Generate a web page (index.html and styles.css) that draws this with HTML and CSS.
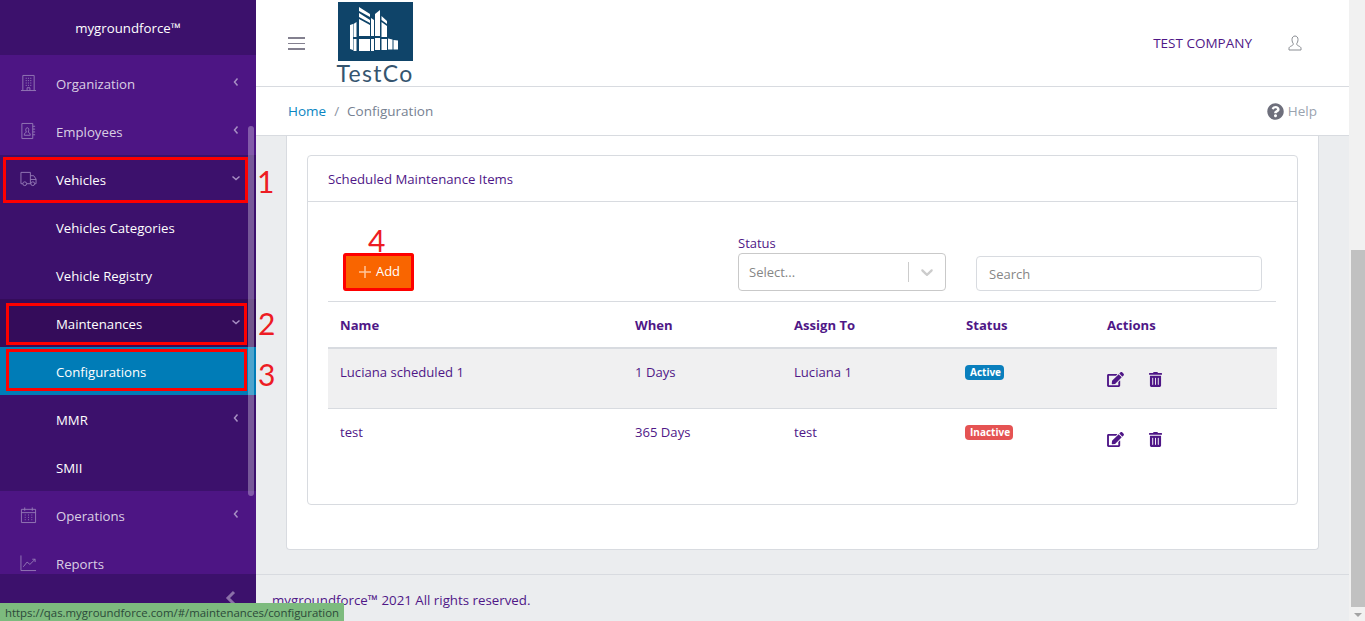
FILE: index.html
```html
<!DOCTYPE html>
<html lang="en">
<head>
<meta charset="utf-8">
<title>Scheduled Maintenance Items</title>
<link rel="stylesheet" href="styles.css">
</head>
<body>
<aside class="sidebar">
  <div class="brand">mygroundforce™</div>
  <nav class="nav">
    <a class="item"><svg class="ico" viewBox="0 0 18 18"><path d="M3 17V1h12v16M1 17h16M7.500 17v-3h3v3M6 4h1.200M8.400 4h1.200M10.800 4H12M6 6.500h1.200M8.400 6.500h1.200M10.800 6.500H12M6 9h1.200M8.400 9h1.200M10.800 9H12M6 11.500h1.200M8.400 11.500h1.200M10.800 11.500H12"/></svg><span class="label">Organization</span><svg class="chev" viewBox="0 0 8 10"><path d="M5.500 1.500 2.500 5l3 3.500"/></svg></a>
    <a class="item"><svg class="ico" viewBox="0 0 18 18"><path d="M2 1h11.500v16H2zM13.500 4H16M13.500 7H16M13.500 10H16M13.500 13H16M4.500 13.500c0-2 1-2.800 2.300-3.300C5.700 8.800 5.800 5.500 7.700 5.500s2 3.300.9 4.700c1.300.5 2.300 1.300 2.300 3.300z"/></svg><span class="label">Employees</span><svg class="chev" viewBox="0 0 8 10"><path d="M5.500 1.500 2.500 5l3 3.500"/></svg></a>
    <a class="item open"><svg class="ico" viewBox="0 0 18 18"><path d="M3 14H1V2h10v12H7M11 5.500h3.500L17 9v5h-1.500M11 14h.500M11 9.500h6M3 14a2 2 0 1 0 4 0 2 2 0 1 0-4 0M11.500 14a2 2 0 1 0 4 0 2 2 0 1 0-4 0"/></svg><span class="label">Vehicles</span><svg class="chev" viewBox="0 0 10 8"><path d="M1.500 2.500 5 5.500l3.500-3"/></svg></a>
    <a class="item sub">Vehicles Categories</a>
    <a class="item sub">Vehicle Registry</a>
    <a class="item sub deep"><span class="label">Maintenances</span><svg class="chev" viewBox="0 0 10 8"><path d="M1.500 2.500 5 5.500l3.500-3"/></svg></a>
    <a class="item sub current">Configurations</a>
    <a class="item sub"><span class="label">MMR</span><svg class="chev" viewBox="0 0 8 10"><path d="M5.500 1.500 2.500 5l3 3.500"/></svg></a>
    <a class="item sub">SMII</a>
    <a class="item"><svg class="ico" viewBox="0 0 18 18"><path d="M1.500 3h15v14h-15zM1.500 6.500h15M5 1v3.500M13 1v3.500M5 9h1M8.500 9h1M12 9h1M5 11.500h1M8.500 11.500h1M12 11.500h1M5 14h1M8.500 14h1M12 14h1"/></svg><span class="label">Operations</span><svg class="chev" viewBox="0 0 8 10"><path d="M5.500 1.500 2.500 5l3 3.500"/></svg></a>
    <a class="item"><svg class="ico" viewBox="0 0 18 18"><path d="M1 1v16h16M3.500 13l4-5 3 2.500L16 5M13 5h3v3"/></svg><span class="label">Reports</span></a>
    <div class="nav-thumb"></div>
  </nav>
  <div class="collapse"><svg class="collapse-ico" viewBox="0 0 12 16"><path d="M9 2 3 8l6 6"/></svg></div>
</aside>

<div class="main">
  <header class="topbar">
    <div class="burger"><i></i><i></i><i></i></div>
    <div class="logo">
      <svg class="logo-mark" viewBox="0 0 75 59">
        <rect width="75" height="59" fill="#0f4469"/>
        <path fill="#fff" d="M12 23l3-1v26l-3-1zM15.500 22l3-2v15h-3zM15.500 37h3v12h-3zM21 5l11 7v3L21 9zM21 11l11 7v3l-11-6zM21 17l11 6v11H21zM21 37h11v12H21zM33 16l3 2v16h-3zM33 37h3v12h-3zM37 12l5-4v26h-5zM37 36h5v12h-5zM43.500 14l5.500 5v3l-5.500-4zM43.500 20l5.500 4v11h-5.500zM43.500 37H49v11h-5.500zM50 36.500l4.500 1v10H50zM55.500 38l4.500 .6v9h-4.500z"/>
      </svg>
      <span class="logo-text">TestCo</span>
    </div>
    <div class="company">TEST COMPANY</div>
    <svg class="user" viewBox="0 0 14 16"><path d="M4 4.500C4 2.500 5.200 1 7 1s3 1.500 3 3.500c0 2-.8 3.500-1.300 4.200 0 1.300.6 1.600 2 2.300 1.500.7 2.300 1.300 2.300 2.200V15H1v-1.800c0-.9.800-1.500 2.300-2.200 1.400-.7 2-1 2-2.300C4.800 8 4 6.500 4 4.500z"/></svg>
  </header>
  <div class="crumbs">
    <a class="home">Home</a><span class="sep">/</span><span class="here">Configuration</span>
    <span class="help"><svg class="help-ico" viewBox="0 0 512 512"><path d="M504 256c0 136.997-111.043 248-248 248S8 392.997 8 256C8 119.083 119.043 8 256 8s248 111.083 248 248zM262.655 90c-54.497 0-89.255 22.957-116.549 63.758-3.536 5.286-2.353 12.415 2.715 16.258l34.699 26.31c5.205 3.947 12.621 3.008 16.665-2.122 17.864-22.658 30.113-35.797 57.303-35.797 20.429 0 45.698 13.148 45.698 32.958 0 14.976-12.363 22.667-32.534 33.976C247.128 238.528 216 254.941 216 296v4c0 6.627 5.373 12 12 12h56c6.627 0 12-5.373 12-12v-1.333c0-28.462 83.186-29.647 83.186-106.667 0-58.002-60.165-102-116.531-102zM256 338c-25.365 0-46 20.635-46 46 0 25.364 20.635 46 46 46s46-20.636 46-46c0-25.365-20.635-46-46-46z"/></svg>Help</span>
  </div>
  <main class="content">
    <section class="outer">
      <div class="card">
        <div class="card-head">Scheduled Maintenance Items</div>
        <div class="card-body">
          <div class="toolbar">
            <button class="add"><svg class="plus" viewBox="0 0 14 14"><path d="M7 1v12M1 7h12"/></svg>Add</button>
            <div class="status-field">
              <label class="field-label">Status</label>
              <div class="select"><span class="placeholder">Select...</span><span class="divider"></span><svg class="select-chev" viewBox="0 0 20 20"><path d="M4.516 7.548c.436-.446 1.043-.481 1.576 0L10 11.295l3.908-3.747c.533-.481 1.141-.446 1.574 0 .436.445.408 1.197 0 1.615-.406.418-4.695 4.502-4.695 4.502a1.095 1.095 0 0 1-1.576 0S4.924 9.581 4.516 9.163s-.436-1.170 0-1.615z"/></svg></div>
            </div>
            <div class="search"><span class="placeholder">Search</span></div>
          </div>
          <table class="grid">
            <thead>
              <tr><th class="c1">Name</th><th class="c2">When</th><th class="c3">Assign To</th><th class="c4">Status</th><th class="c5">Actions</th></tr>
            </thead>
            <tbody>
              <tr class="odd"><td>Luciana scheduled 1</td><td>1 Days</td><td>Luciana 1</td><td><span class="badge active">Active</span></td><td><div class="acts"><svg class="edit" viewBox="0 0 576 512"><use href="#i-edit"/></svg><svg class="trash" viewBox="0 0 448 512"><use href="#i-trash"/></svg></div></td></tr>
              <tr><td>test</td><td>365 Days</td><td>test</td><td><span class="badge inactive">Inactive</span></td><td><div class="acts"><svg class="edit" viewBox="0 0 576 512"><use href="#i-edit"/></svg><svg class="trash" viewBox="0 0 448 512"><use href="#i-trash"/></svg></div></td></tr>
            </tbody>
          </table>
        </div>
      </div>
    </section>
  </main>
  <footer class="foot">mygroundforce™ 2021 All rights reserved.</footer>
</div>
<div class="rail"><div class="rail-thumb"></div><div class="rail-arrow"></div></div>

<svg class="defs" aria-hidden="true">
  <symbol id="i-edit" viewBox="0 0 576 512"><path d="M402.600 83.200l90.200 90.200c3.800 3.800 3.800 10 0 13.800L274.400 405.600l-92.800 10.300c-12.400 1.400-22.900-9.100-21.500-21.500l10.300-92.800L388.800 83.200c3.800-3.800 10-3.800 13.800 0zm162-22.900l-48.800-48.800c-15.200-15.200-39.900-15.200-55.200 0l-35.400 35.400c-3.800 3.800-3.800 10 0 13.800l90.200 90.200c3.800 3.800 10 3.800 13.800 0l35.400-35.400c15.200-15.300 15.200-40 0-55.200zM384 346.200V448H64V128h229.800c3.200 0 6.200-1.300 8.500-3.500l40-40c7.600-7.600 2.200-20.500-8.500-20.500H48C21.500 64 0 85.500 0 112v352c0 26.500 21.500 48 48 48h352c26.500 0 48-21.500 48-48V306.200c0-10.700-12.900-16-20.500-8.500l-40 40c-2.200 2.300-3.500 5.300-3.500 8.500z"/></symbol>
  <symbol id="i-trash" viewBox="0 0 448 512"><path d="M32 464a48 48 0 0 0 48 48h288a48 48 0 0 0 48-48V128H32zm272-256a16 16 0 0 1 32 0v224a16 16 0 0 1-32 0zm-96 0a16 16 0 0 1 32 0v224a16 16 0 0 1-32 0zm-96 0a16 16 0 0 1 32 0v224a16 16 0 0 1-32 0zM432 32H312l-9.400-18.700A24 24 0 0 0 281.100 0H166.800a23.720 23.720 0 0 0-21.400 13.300L136 32H16A16 16 0 0 0 0 48v32a16 16 0 0 0 16 16h416a16 16 0 0 0 16-16V48a16 16 0 0 0-16-16z"/></symbol>
</svg>

<div class="mark m1"></div>
<div class="mark m2"></div>
<div class="mark m3"></div>
<div class="mark m4"></div>
<div class="num n1">1</div>
<div class="num n2">2</div>
<div class="num n3">3</div>
<div class="num n4">4</div>
<div class="url">https://qas.mygroundforce.com/#/maintenances/configuration</div>
</body>
</html>
```
FILE: styles.css
```css
* { box-sizing: border-box; }
html, body { height: 100%; }
body {
  margin: 0;
  display: flex;
  height: 621px;
  overflow: hidden;
  font-family: "Open Sans", "Noto Sans", sans-serif;
  font-size: 13.200px;
  color: #4f1787;
  background: #ebedef;
}

/* sidebar */
.sidebar { width: 256px; flex: none; display: flex; flex-direction: column; background: #4d1584; }
.brand { height: 55px; flex: none; background: #3c116c; color: #fff; display: flex; align-items: center; justify-content: center; font-size: 13.250px; padding-top: 1px; }
.nav { position: relative; flex: 1; min-height: 0; overflow: hidden; padding-top: 4px; }
.item { height: 48px; display: flex; align-items: center; padding: 2px 15px 0 20px; color: rgba(255,255,255,.8); font-size: 13.200px; }
.item.open { background: #3c116c; color: #fff; }
.item.sub { background: #3c116c; color: #fff; padding-left: 56px; }
.item.deep { background: #340c5a; }
.item.current { background: #007cb7; }
.ico { width: 17px; height: 18px; margin: -2px 19px 0 0; flex: none; fill: none; stroke: #9479b6; stroke-width: 1; }
.label { flex: 1; }
.chev { width: 10px; height: 10px; flex: none; fill: none; stroke: #a78fc3; stroke-width: 1.500; margin-top: -5px; }
.nav-thumb { position: absolute; left: 248px; top: 71px; width: 6px; height: 370px; border-radius: 3px; background: rgba(255,255,255,.3); }
.collapse { height: 47px; flex: none; background: #3c116c; display: flex; justify-content: flex-end; align-items: flex-start; padding: 16px 18px 0 0; }
.collapse-ico { width: 14px; height: 16px; fill: none; stroke: #8b70a8; stroke-width: 3; }

/* main */
.main { flex: 1; min-width: 0; display: flex; flex-direction: column; }
.topbar { height: 87px; flex: none; background: #fff; border-bottom: 1px solid #d8dbe0; display: flex; align-items: flex-start; padding: 0 47px 0 32px; }
.burger { width: 17px; margin-top: 37px; display: flex; flex-direction: column; gap: 4px; }
.burger i { display: block; height: 1.500px; background: #83808f; }
.logo { margin-left: 32px; width: 76px; display: flex; flex-direction: column; align-items: center; padding-top: 2px; }
.logo-mark { width: 75px; height: 59px; display: block; }
.logo-text { font-family: "Lato", sans-serif; font-size: 23px; line-height: 24px; color: #35556f; letter-spacing: 1.300px; white-space: nowrap; }
.company { margin-left: auto; margin-top: 34px; font-size: 13.500px; line-height: 18px; color: #4f1787; }
.user { width: 14px; height: 16px; margin: 35px 0 0 36px; fill: none; stroke: #8a8d93; stroke-width: 1; }
.crumbs { height: 49px; flex: none; background: #fff; border-bottom: 1px solid #d8dbe0; display: flex; align-items: center; padding: 0 32px; font-size: 13.500px; }
.home { color: #0a85c2; }
.sep { margin: 0 8px; color: #8a93a2; }
.here { color: #768192; }
.help { margin-left: auto; display: flex; align-items: center; color: #9aa3af; }
.help-ico { width: 17px; height: 17px; margin-right: 4px; fill: #6e6f7c; }
.content { flex: 1; min-height: 0; overflow: hidden; padding: 0 30px; }
.outer { background: #fff; border: 1px solid #d8dbe0; border-top: 0; border-radius: 0 0 4px 4px; padding: 19px 20px 44px; }
.card { border: 1px solid #d8dbe0; border-radius: 4px; height: 350px; }
.card-head { height: 46px; border-bottom: 1px solid #d8dbe0; display: flex; align-items: center; padding: 0 20px; font-size: 13.200px; }
.card-body { padding: 0 21px 0 20px; }
.toolbar { height: 100px; border-bottom: 1px solid #d8dbe0; display: flex; align-items: flex-end; padding: 0 0 10px 16px; }
.add { width: 70px; height: 38px; border: 0; border-radius: 3px; background: #f96500; color: #fff; font: 500 13px "Open Sans", sans-serif; display: flex; align-items: center; justify-content: center; padding: 0 0 2px; }
.plus { width: 14px; height: 14px; margin: 2px 4px 0 0; fill: none; stroke: #ffc59b; stroke-width: 1.500; }
.status-field { margin-left: 324px; width: 208px; }
.field-label { display: block; font-size: 13px; line-height: 18px; margin-bottom: 1px; }
.select { height: 38px; border: 1px solid #c9c9c9; border-radius: 4px; display: flex; align-items: center; padding: 0 8px 0 10px; }
.placeholder { color: #868686; font-size: 13px; flex: 1; }
.divider { width: 1px; height: 20px; background: #cccccc; }
.select-chev { width: 20px; height: 20px; margin-left: 8px; fill: #cccccc; }
.search { margin-left: 30px; width: 286px; height: 35px; border: 1px solid #d8dbe0; border-radius: 4px; display: flex; align-items: center; padding: 0 12px; }
.grid { width: 100%; border-collapse: collapse; table-layout: fixed; font-size: 13.100px; }
.c1 { width: 295px; } .c2 { width: 159px; } .c3 { width: 172px; } .c4 { width: 141px; } .c5 { width: 182px; }
.grid th { height: 46px; text-align: left; padding: 0 12px; font-weight: 700; border-bottom: 2px solid #d8dbe0; }
.grid td { height: 60px; padding: 14px 12px 0; vertical-align: top; border-bottom: 1px solid #d8dbe0; line-height: 18px; }
.grid tr:last-child td { border-bottom: 0; }
.odd td { background: #f0f0f1; }
.badge { display: inline-block; height: 15px; line-height: 15px; border-radius: 4px; padding: 0 3px 0 5px; margin-left: -1px; color: #fff; font-size: 10px; font-weight: 700; vertical-align: top; margin-top: 2px; }
.active { background: #0a7fbd; }
.inactive { background: #e55353; }
.acts { display: flex; align-items: center; margin-top: 8px; height: 16px; }
.grid tr:last-child .acts { margin-top: 9px; }
.edit { width: 17px; height: 15px; fill: #4f1787; }
.trash { width: 13px; height: 15px; margin-left: 25px; fill: #4f1787; }
.foot { height: 47px; flex: none; border-top: 1px solid #d8dbe0; background: #ebedef; padding: 16px 16px 0; font-size: 13.300px; line-height: 18px; }
.rail { width: 16px; flex: none; background: #f1f1f1; padding: 250px 0 0 2px; }
.rail-thumb { height: 357px; background: #c1c1c1; }
.rail-arrow { width: 0; height: 0; margin: 6px 0 0 3px; border: 4px solid transparent; border-top: 4px solid #a3a3a3; border-bottom: 0; }
.defs { position: absolute; width: 0; height: 0; }

/* annotations over the picture */
.mark { position: absolute; border: 3px solid #fe0000; }
.m1 { left: 3px; top: 157px; width: 245px; height: 46px; }
.m2 { left: 6px; top: 303px; width: 241px; height: 42px; }
.m3 { left: 6px; top: 349px; width: 241px; height: 42px; }
.m4 { left: 343px; top: 253px; width: 71px; height: 38px; border-radius: 3px; }
.num { position: absolute; color: #ed1c24; font-family: "Lato", sans-serif; font-size: 30px; line-height: 36px; }
.n1 { left: 257px; top: 163px; }
.n2 { left: 258px; top: 305px; }
.n3 { left: 258px; top: 356px; }
.n4 { left: 368px; top: 222px; }
.url { position: absolute; left: 0; bottom: 0; height: 18px; width: 344px; background: #7dbb7e; color: #2c4a3a; font-size: 11.400px; line-height: 20px; padding-left: 5px; white-space: nowrap; overflow: hidden; }
```
